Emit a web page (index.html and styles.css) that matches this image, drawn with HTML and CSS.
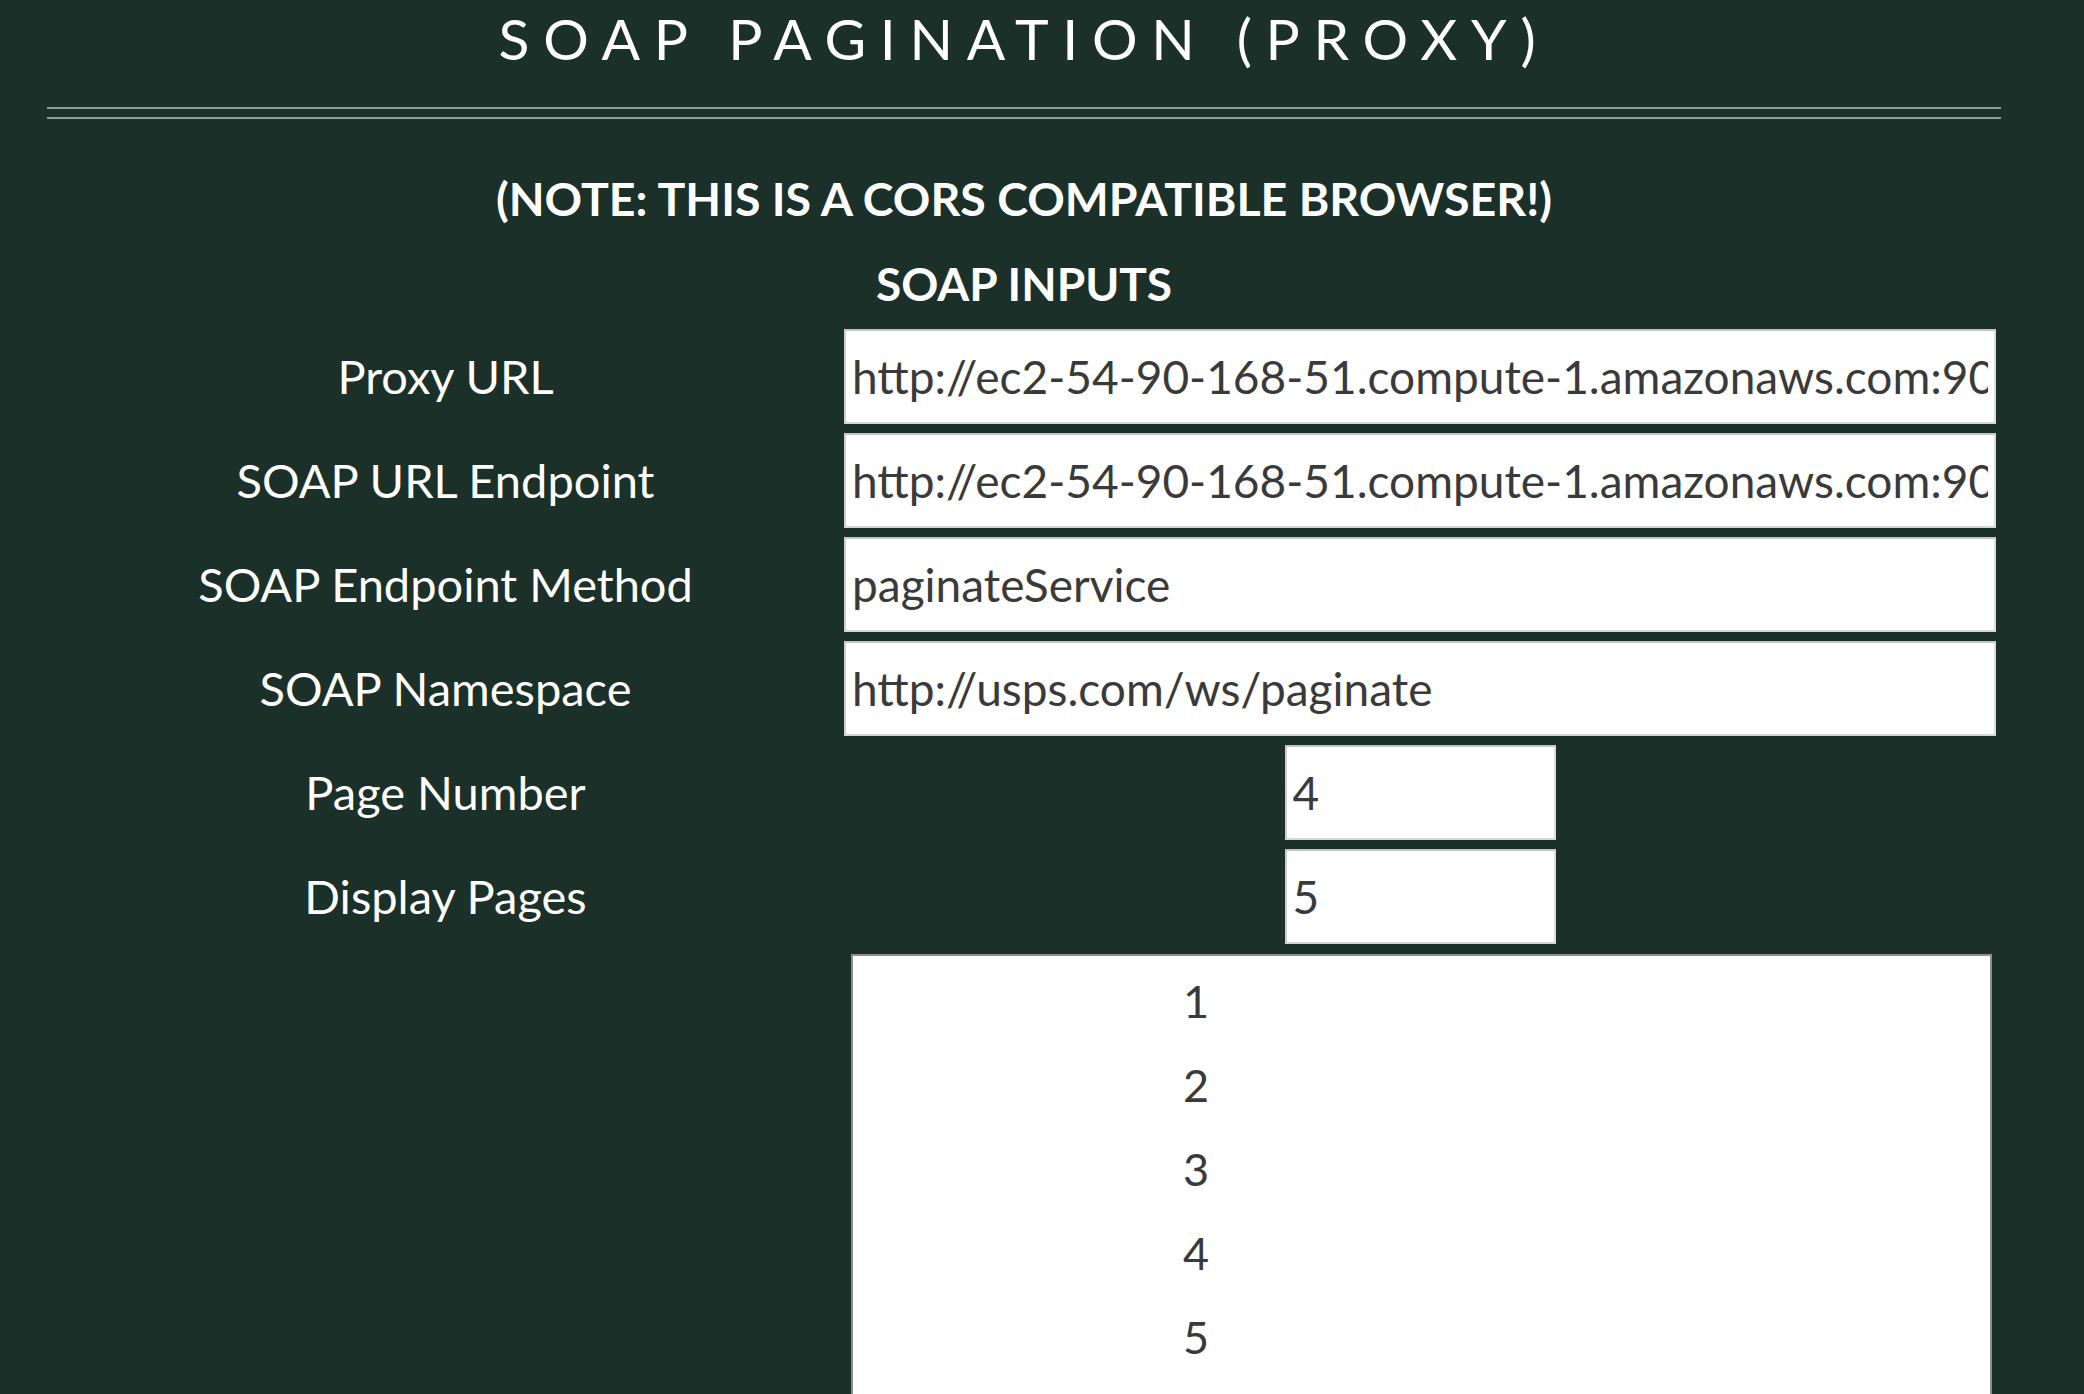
FILE: index.html
```html
<!DOCTYPE html>
<html lang="en">
<head>
<meta charset="utf-8">
<title>SOAP Pagination (Proxy)</title>
<link rel="stylesheet" href="styles.css">
</head>
<body>
<div class="page">
  <h1 class="title">SOAP PAGINATION (PROXY)</h1>
  <div class="rule"></div>
  <h2 class="note">(NOTE: THIS IS A CORS COMPATIBLE BROWSER!)</h2>
  <h3 class="section">SOAP INPUTS</h3>
  <div class="form">
    <label class="label">Proxy URL</label>
    <div class="cell"><input class="field" type="text" value="http://ec2-54-90-168-51.compute-1.amazonaws.com:9000/proxy"></div>
    <label class="label">SOAP URL Endpoint</label>
    <div class="cell"><input class="field" type="text" value="http://ec2-54-90-168-51.compute-1.amazonaws.com:9000/ws/paginate"></div>
    <label class="label">SOAP Endpoint Method</label>
    <div class="cell"><input class="field" type="text" value="paginateService"></div>
    <label class="label">SOAP Namespace</label>
    <div class="cell"><input class="field" type="text" value="http://usps.com/ws/paginate"></div>
    <label class="label">Page Number</label>
    <div class="cell"><input class="field small" type="text" value="4"></div>
    <label class="label">Display Pages</label>
    <div class="cell"><input class="field small" type="text" value="5"></div>
    <div class="spacer"></div>
    <div class="pages">
      <div class="pg">1</div>
      <div class="pg">2</div>
      <div class="pg">3</div>
      <div class="pg">4</div>
      <div class="pg">5</div>
    </div>
  </div>
</div>
</body>
</html>
```
FILE: styles.css
```css
html, body {
  margin: 0;
  padding: 0;
  background: #1b3028;
}
body {
  font-family: "Lato", "Liberation Sans", sans-serif;
  color: #ffffff;
  overflow: hidden;
}
.page {
  width: 1954px;
  margin-left: 47px;
}
.title {
  margin: 0;
  padding-top: 10px;
  font-size: 57px;
  line-height: 57px;
  font-weight: 400;
  letter-spacing: 0.24em;
  text-align: center;
}
.rule {
  margin-top: 40px;
  height: 8px;
  border-top: 2px solid #8d9c94;
  border-bottom: 2px solid #8d9c94;
}
.note {
  margin: 56px 0 0;
  font-size: 46.5px;
  line-height: 46px;
  font-weight: 700;
  text-align: center;
}
.section {
  margin: 40px 0 0;
  font-size: 46px;
  line-height: 46px;
  font-weight: 700;
  text-align: center;
}
.form {
  margin-top: 22px;
  display: grid;
  grid-template-columns: 797px 1157px;
  row-gap: 9px;
  align-items: center;
}
.label {
  text-align: center;
  font-size: 47px;
  line-height: 1.2;
}
.cell {
  width: 1152px;
  display: flex;
  justify-content: center;
}
.field {
  box-sizing: border-box;
  width: 1152px;
  height: 95px;
  margin: 0;
  padding: 0 6px;
  font-family: "Lato", "Liberation Sans", sans-serif;
  font-size: 46px;
  color: #3a3a3a;
  background: #ffffff;
  border-style: solid;
  border-width: 2px;
  border-color: #c4c4c4 #dcdcdc #d4d4d4 #cfcfcf;
  outline: none;
}
.field.small {
  width: 271px;
}
.pages {
  box-sizing: border-box;
  margin-top: 1px;
  margin-left: 7px;
  width: 1141px;
  height: 460px;
  background: #ffffff;
  border: 2px solid #8e8e8e;
  padding: 3px 0 0 330px;
  color: #3a3a3a;
}
.pg {
  font-size: 45px;
  line-height: 84px;
}
```
